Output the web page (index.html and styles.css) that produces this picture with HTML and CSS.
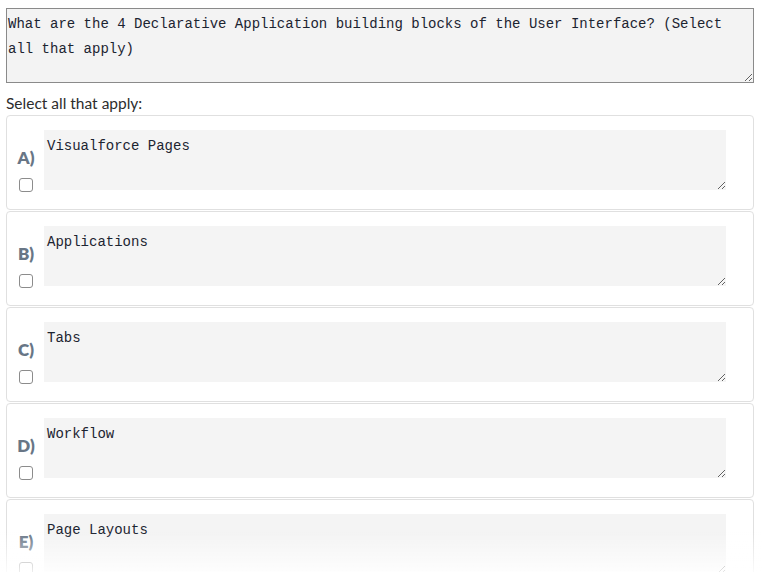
FILE: index.html
```html
<!DOCTYPE html>
<html>
<head>
<meta charset="utf-8">
<link rel="stylesheet" href="styles.css">
</head>
<body>
<div class="page">
  <textarea class="question">What are the 4 Declarative Application building blocks of the User Interface? (Select all that apply)</textarea>
  <div class="hint">Select all that apply:</div>
  <div class="answers">
    <div class="card">
      <div class="side"><span class="letter">A)</span><span class="check"></span></div>
      <textarea class="answer">Visualforce Pages</textarea>
    </div>
    <div class="card">
      <div class="side"><span class="letter">B)</span><span class="check"></span></div>
      <textarea class="answer">Applications</textarea>
    </div>
    <div class="card">
      <div class="side"><span class="letter">C)</span><span class="check"></span></div>
      <textarea class="answer">Tabs</textarea>
    </div>
    <div class="card">
      <div class="side"><span class="letter">D)</span><span class="check"></span></div>
      <textarea class="answer">Workflow</textarea>
    </div>
    <div class="card">
      <div class="side"><span class="letter">E)</span><span class="check"></span></div>
      <textarea class="answer">Page Layouts</textarea>
    </div>
  </div>
</div>
<div class="fade"></div>
</body>
</html>
```
FILE: styles.css
```css
html, body {
  margin: 0;
  padding: 0;
  background: #ffffff;
  overflow: hidden;
}
.page {
  padding: 8px 8px 0 6px;
  font-family: "Lato", "Liberation Sans", sans-serif;
  color: #333;
}
textarea {
  display: block;
  font-family: "Liberation Mono", "Courier New", monospace;
  font-size: 14px;
  line-height: 25px;
  color: #1c2431;
  box-sizing: border-box;
  margin: 0;
}
.question {
  width: 748px;
  height: 75px;
  background: #f3f3f3;
  border: 1px solid #8a8a8a;
  padding: 3px 1px 2px 1px;
  resize: vertical;
}
.hint {
  font-size: 15.5px;
  line-height: 20px;
  margin: 10px 0 2px 0;
  color: #2d2d2d;
}
.answers {
  display: flex;
  flex-direction: column;
  gap: 1px;
}
.card {
  display: flex;
  box-sizing: border-box;
  width: 748px;
  height: 95px;
  border: 1px solid #e0e0e0;
  border-radius: 4px;
  padding: 14px 0 0 0;
}
.side {
  width: 37px;
  display: flex;
  flex-direction: column;
  align-items: center;
  padding-top: 18px;
}
.letter {
  font-weight: 800;
  font-size: 17px;
  line-height: 20px;
  color: #687686;
  margin-left: 1px;
}
.check {
  display: block;
  width: 12px;
  height: 12px;
  border: 1px solid #8c8c8c;
  border-radius: 3px;
  margin-top: 10px;
  background: #fff;
}
.answer {
  width: 682px;
  height: 60px;
  background: #f4f4f4;
  border: none;
  padding: 4px 3px 2px 3px;
  resize: vertical;
}
.fade {
  position: fixed;
  left: 0;
  right: 0;
  bottom: 0;
  height: 40px;
  background: linear-gradient(rgba(255,255,255,0), rgba(255,255,255,0.85));
  pointer-events: none;
}
```
